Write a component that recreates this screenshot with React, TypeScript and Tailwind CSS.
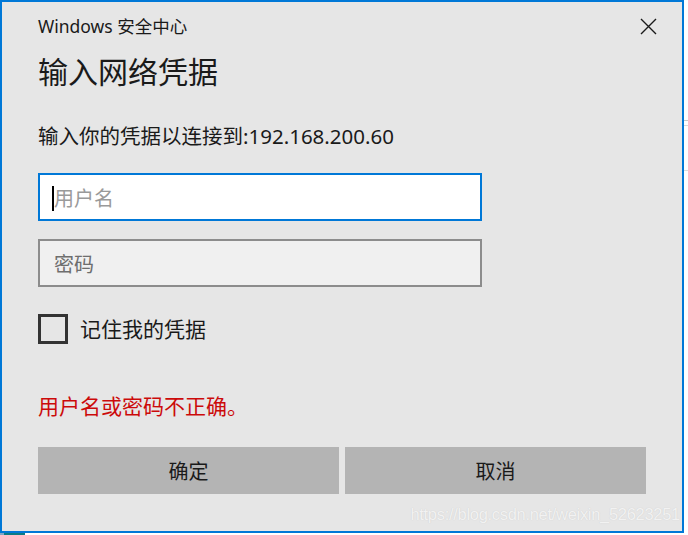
import React from 'react';

const CloseIcon = () => (
  <svg width="17" height="17" viewBox="0 0 17 17" fill="none">
    <path d="M1 1 L16 16 M16 1 L1 16" stroke="#1a1a1a" strokeWidth="1.4" />
  </svg>
);

export default function App() {
  return (
    <div className="w-[688px] h-[535px] bg-white overflow-hidden font-['Noto_Sans','Noto_Sans_CJK_SC',sans-serif]">
      <div className="flex">
        {/* dialog */}
        <div className="relative w-[684px] h-[533px] border-2 border-[#0078d7] bg-[#e6e6e6] px-[36px] flex flex-col text-[#1a1a1a]">
          <div className="mt-[12px] h-[24px] flex items-center justify-between">
            <span className="text-[17.5px] leading-[24px]">Windows 安全中心</span>
            <span className="mr-[-11px]">
              <CloseIcon />
            </span>
          </div>

          <h1 className="mt-[14px] text-[30px] leading-[40px] font-normal">输入网络凭据</h1>

          <p className="mt-[30px] text-[20.5px] leading-[28px]">输入你的凭据以连接到:192.168.200.60</p>

          <div className="mt-[23px] w-[444px] h-[48px] border-2 border-[#0078d7] bg-white flex items-center pl-[12px]">
            <span className="w-[2px] h-[25px] mt-[2px] bg-black" />
            <span className="mt-[4px] text-[20px] text-[#9a9a9a] leading-none">用户名</span>
          </div>

          <div className="mt-[18px] w-[444px] h-[48px] border-2 border-[#8c8c8c] bg-[#f0f0f0] flex items-center pl-[14px]">
            <span className="mt-[4px] text-[20px] text-[#6e6e6e] leading-none">密码</span>
          </div>

          <label className="mt-[27px] h-[30px] flex items-center gap-[12px]">
            <span className="w-[30px] h-[30px] border-[3px] border-[#333333]" />
            <span className="text-[21px] leading-none">记住我的凭据</span>
          </label>

          <p className="mt-[48px] text-[21px] leading-[28px] text-[#cc0a0a]">用户名或密码不正确。</p>

          <div className="mt-[27px] flex gap-[6px]">
            <button className="w-[301px] h-[47px] pt-[3px] bg-[#b4b4b4] text-[20px] text-[#1a1a1a]">确定</button>
            <button className="w-[301px] h-[47px] pt-[3px] bg-[#b4b4b4] text-[20px] text-[#1a1a1a]">取消</button>
          </div>

          {/* watermark */}
          <span className="absolute right-[2px] bottom-[4px] text-[16.5px] tracking-[-0.3px] text-[#f2f2f2] font-['Liberation_Sans',sans-serif] [text-shadow:0_0_1px_#c8c8c8]">
            https://blog.csdn.net/weixin_52623251
          </span>
        </div>

        {/* window behind, right edge */}
        <div className="w-[4px] flex flex-col">
          <div className="mt-[120px] h-[1px] bg-[#c8c8c8]" />
          <div className="mt-[4px] h-[1px] bg-[#d8d8d8]" />
          <div className="mt-[44px] h-[1px] bg-[#dcdcdc]" />
        </div>
      </div>
      <div className="h-[2px] flex">
        <div className="w-[4px] bg-[#7fa8c8]" />
        <div className="w-[21px] bg-[#0b7b86]" />
      </div>
    </div>
  );
}
